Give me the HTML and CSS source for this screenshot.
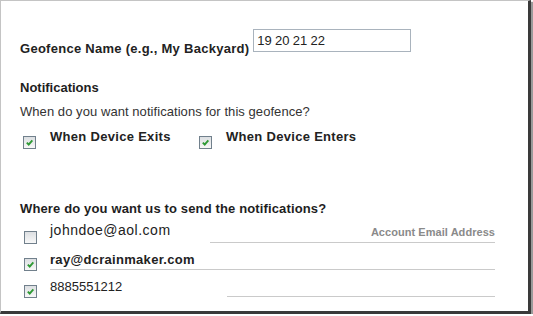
FILE: index.html
```html
<!DOCTYPE html>
<html>
<head>
<meta charset="utf-8">
<link rel="stylesheet" href="styles.css">
</head>
<body>
<div class="frame">
  <div class="name-row">
    <span class="label">Geofence Name (e.g., My Backyard)</span>
    <span class="input">19 20 21 22</span>
  </div>
  <h2 class="heading">Notifications</h2>
  <p class="question">When do you want notifications for this geofence?</p>
  <div class="events">
    <div class="event"><span class="cb checked"><svg viewBox="0 0 8 8"><path d="M1.6 4.1 L3.3 5.8 L6.5 2.2"/></svg></span><span class="event-label">When Device Exits</span></div>
    <div class="event"><span class="cb checked"><svg viewBox="0 0 8 8"><path d="M1.6 4.1 L3.3 5.8 L6.5 2.2"/></svg></span><span class="event-label">When Device Enters</span></div>
  </div>
  <h2 class="heading where">Where do you want us to send the notifications?</h2>
  <div class="targets">
    <div class="target">
      <span class="cb"></span>
      <span class="t-text email">johndoe@aol.com</span>
      <span class="t-line l1"><span class="hint">Account Email Address</span></span>
    </div>
    <div class="target">
      <span class="cb checked"><svg viewBox="0 0 8 8"><path d="M1.6 4.1 L3.3 5.8 L6.5 2.2"/></svg></span>
      <span class="t-field"><span class="t-text bold">ray@dcrainmaker.com</span></span>
    </div>
    <div class="target">
      <span class="cb checked"><svg viewBox="0 0 8 8"><path d="M1.6 4.1 L3.3 5.8 L6.5 2.2"/></svg></span>
      <span class="t-text phone">8885551212</span>
      <span class="t-line l3"></span>
    </div>
  </div>
</div>
</body>
</html>
```
FILE: styles.css
```css
html, body { margin: 0; padding: 0; background: #fff; }
body { font-family: "Liberation Sans", Arial, sans-serif; color: #222; }
.frame {
  width: 508px;
  height: 310px;
  border-top: 1px solid #c4c4c4;
  border-left: 1px solid #c4c4c4;
  border-right: 3px solid #3a3a3a;
  border-bottom: 3px solid #3a3a3a;
  box-shadow: 2px 2px 1px #9a9a9a;
  padding-left: 19px;
  overflow: hidden;
}
.name-row { display: flex; align-items: flex-start; margin-top: 28px; height: 28px; }
.label { font-weight: bold; font-size: 13px; line-height: 15px; letter-spacing: 0.27px; margin-top: 12px; color: #222; }
.input {
  box-sizing: border-box;
  margin-left: 4px;
  width: 158px; height: 23px;
  border: 1px solid #a9b3bd;
  font-size: 13px; color: #222;
  padding: 3px 0 0 3px; line-height: 16px;
  letter-spacing: -0.1px;
}
.heading { font-size: 13px; font-weight: bold; margin: 23px 0 0; line-height: 15px; color: #1e1e1e; }
.question { font-size: 13px; margin: 9px 0 0; color: #333; line-height: 15px; letter-spacing: 0.06px; }
.events { display: flex; align-items: flex-start; margin-top: 10px; }
.event { display: flex; align-items: flex-start; width: 176px; }
.event .cb { margin-left: 3px; margin-top: 7px; }
.event-label { font-size: 13px; font-weight: bold; margin-left: 14px; letter-spacing: 0.3px; line-height: 15px; color: #222; }
.cb {
  box-sizing: border-box;
  width: 13px; height: 13px; flex: none;
  border: 1px solid #71808c;
  background: linear-gradient(#dcdfe2, #f8f8f8);
  display: inline-flex; align-items: center; justify-content: center;
}
.cb svg { width: 9px; height: 9px; fill: none; stroke: #2f9a35; stroke-width: 1.7; }
.where { margin-top: 52px; letter-spacing: 0.14px; }
.targets { margin-top: 6px; }
.target { display: flex; align-items: flex-start; height: 27px; width: 475px; }
.target .cb { margin-left: 4px; margin-top: 9px; }
.t-text { font-size: 13px; margin-left: 13px; line-height: 16px; color: #222; }
.t-text.email { font-size: 14px; letter-spacing: 0.5px; }
.t-text.phone { padding-top: 3px; }
.t-text.bold { font-size: 13px; font-weight: bold; margin-left: 0; letter-spacing: 0.3px; padding-top: 3px; display: block; }
.t-field { margin-left: 13px; flex: 1; height: 20px; border-bottom: 1px solid #cacaca; }
.t-line { margin-left: auto; height: 20px; border-bottom: 1px solid #cacaca; display: flex; justify-content: flex-end; align-items: flex-end; }
.l1 { width: 285px; }
.l3 { width: 268px; }
.hint { font-size: 11px; line-height: 13px; font-weight: bold; color: #8a8a8a; padding-bottom: 3px; margin-right: 0; letter-spacing: 0.05px; }
```
